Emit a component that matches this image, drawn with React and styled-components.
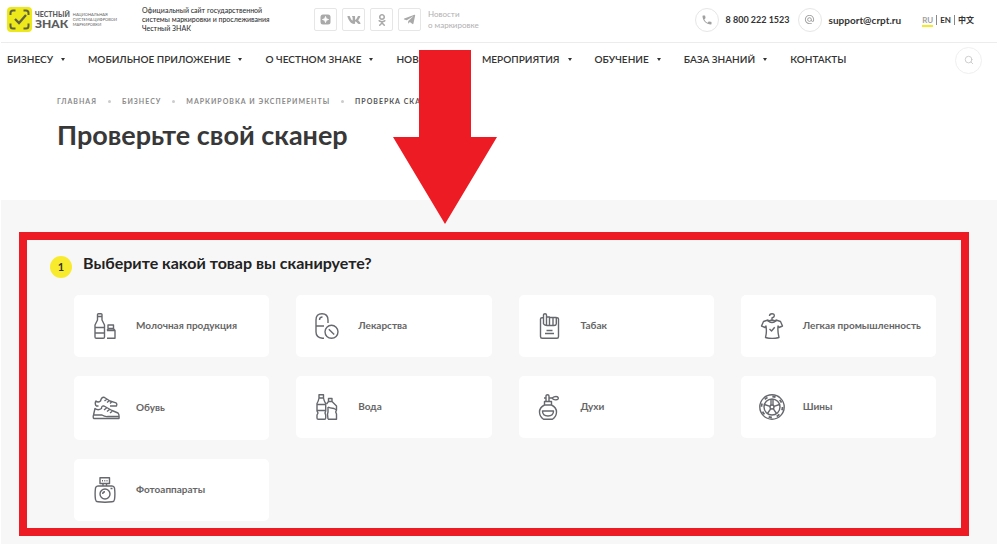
import React from "react";
import styled, { createGlobalStyle } from "styled-components";
import { FaVk, FaOdnoklassniki, FaTelegramPlane } from "react-icons/fa";
import { MdPhone, MdAlternateEmail } from "react-icons/md";
import { FiSearch } from "react-icons/fi";

const menu = [
  { label: "БИЗНЕСУ", sub: true },
  { label: "МОБИЛЬНОЕ ПРИЛОЖЕНИЕ", sub: true },
  { label: "О ЧЕСТНОМ ЗНАКЕ", sub: true },
  { label: "НОВОСТИ", sub: true },
  { label: "МЕРОПРИЯТИЯ", sub: true },
  { label: "ОБУЧЕНИЕ", sub: true },
  { label: "БАЗА ЗНАНИЙ", sub: true },
  { label: "КОНТАКТЫ", sub: false },
];

const crumbs = ["ГЛАВНАЯ", "БИЗНЕСУ", "МАРКИРОВКА И ЭКСПЕРИМЕНТЫ"];

const products = [
  { name: "Молочная продукция", icon: <MilkIcon /> },
  { name: "Лекарства", icon: <PillsIcon /> },
  { name: "Табак", icon: <TobaccoIcon /> },
  { name: "Легкая промышленность", icon: <ShirtIcon /> },
  { name: "Обувь", icon: <ShoesIcon /> },
  { name: "Вода", icon: <WaterIcon /> },
  { name: "Духи", icon: <PerfumeIcon /> },
  { name: "Шины", icon: <TireIcon /> },
  { name: "Фотоаппараты", icon: <CameraIcon /> },
];

function App() {
  return (
    <Page>
      <GlobalStyle />
      <TopBar>
        <Logo href="#">
          <LogoMark />
          <LogoName>
            <LogoSmall>ЧЕСТНЫЙ</LogoSmall>
            <LogoBig>ЗНАК</LogoBig>
          </LogoName>
          <LogoNote>
            НАЦИОНАЛЬНАЯ
            <br />
            СИСТЕМА ЦИФРОВОЙ
            <br />
            МАРКИРОВКИ
          </LogoNote>
        </Logo>
        <About>
          Официальный сайт государственной
          <br />
          системы маркировки и прослеживания
          <br />
          Честный ЗНАК
        </About>
        <Socials>
          <SocialLink href="#" aria-label="Дзен">
            <ZenIcon />
          </SocialLink>
          <SocialLink href="#" aria-label="ВКонтакте">
            <FaVk size={14} />
          </SocialLink>
          <SocialLink href="#" aria-label="Одноклассники">
            <FaOdnoklassniki size={12} />
          </SocialLink>
          <SocialLink href="#" aria-label="Telegram">
            <FaTelegramPlane size={13} />
          </SocialLink>
          <News>
            Новости
            <br />о маркировке
          </News>
        </Socials>
        <Contacts>
          <Contact href="tel:88002221523">
            <Round>
              <MdPhone size={12} />
            </Round>
            8 800 222 1523
          </Contact>
          <Contact href="mailto:support@crpt.ru" $large>
            <Round>
              <MdAlternateEmail size={11} />
            </Round>
            support@crpt.ru
          </Contact>
        </Contacts>
        <Langs>
          <Lang href="#" $active>
            RU
          </Lang>
          <Lang href="#">EN</Lang>
          <Lang href="#">中文</Lang>
        </Langs>
      </TopBar>

      <NavBar>
        {menu.map((item) => (
          <NavLink href="#" key={item.label}>
            {item.label}
            {item.sub && <Caret />}
          </NavLink>
        ))}
        <SearchButton aria-label="Поиск">
          <FiSearch size={10} />
        </SearchButton>
      </NavBar>

      <Intro>
        <Crumbs>
          {crumbs.map((crumb) => (
            <React.Fragment key={crumb}>
              <Crumb href="#">{crumb}</Crumb>
              <Dot />
            </React.Fragment>
          ))}
          <CurrentCrumb>ПРОВЕРКА СКАНЕРА</CurrentCrumb>
        </Crumbs>
        <Title>Проверьте свой сканер</Title>
      </Intro>

      <Section>
        <Frame>
          <StepHead>
            <StepNumber>1</StepNumber>
            <StepTitle>Выберите какой товар вы сканируете?</StepTitle>
          </StepHead>
          <Grid>
            {products.map((product) => (
              <Card key={product.name}>
                <IconBox>{product.icon}</IconBox>
                <CardName>{product.name}</CardName>
              </Card>
            ))}
          </Grid>
        </Frame>
      </Section>
      <Arrow viewBox="0 0 104 174">
        <path d="M26 0h52v87h26L52 174 0 87h26z" fill="#ed1c24" />
      </Arrow>
    </Page>
  );
}

// Drawings

function LogoMark() {
  return (
    <svg width="25" height="25" viewBox="0 0 25 25" fill="none" stroke="#5f6043" strokeWidth="2">
      <rect width="25" height="25" rx="4" fill="#ece81a" stroke="none" />
      <path d="M3.5 8V6Q3.500 3.500 6 3.500H8.500M16.500 3.500H19Q21.500 3.500 21.500 6V8M21.500 16.500V19Q21.500 21.500 19 21.500H16.500M8.500 21.500H6Q3.500 21.500 3.500 19V16.500" />
      <path d="M8 12l4 4 7-8" strokeWidth="2.300" />
    </svg>
  );
}

function ZenIcon() {
  return (
    <svg width="11" height="11" viewBox="0 0 11 11">
      <rect x="0.5" y="0.5" width="10" height="10" rx="2.5" fill="#a9a9a9" />
      <path d="M5.500 2.500Q5.500 5.500 8.500 5.500Q5.500 5.500 5.500 8.500Q5.500 5.500 2.500 5.500Q5.500 5.500 5.500 2.500z" fill="#fff" stroke="#fff" strokeWidth="1" />
    </svg>
  );
}

function MilkIcon() {
  return (
    <LineIcon viewBox="0 0 26 26">
      <path d="M5.500 1.500Q5.500.7 6.500.7H9Q10 .7 10 1.500V7L12.500 12V24Q12.500 25.300 11.200 25.300H4.300Q3 25.300 3 24V12L5.500 7zM5.500 3.500H10M3 14.500H12.500M3 20H12.500" />
      <path d="M15 25.300H23V17.500L21.500 15.700H16.500L15 17.500M16 12H21.500V15.500H16zM15 17.500H23" />
    </LineIcon>
  );
}

function PillsIcon() {
  return (
    <LineIcon viewBox="0 0 26 26">
      <path d="M10 25.300H8.500Q2 24.500 2 19V7Q2 .7 8 .7T14 7V10M2 13H10M5.500 7Q5.500 4 8.500 4" />
      <circle cx="17.500" cy="18.800" r="6.500" />
      <path d="M14.800 16.200L20.200 21.500" />
    </LineIcon>
  );
}

function TobaccoIcon() {
  return (
    <LineIcon viewBox="0 0 26 26">
      <path d="M6 4.700H5Q3.500 4.700 3.500 6V23.500Q3.500 25.300 5.200 25.300H20Q21.500 25.300 21.500 23.500V6Q21.500 4.700 20 4.700H19.500" />
      <path d="M6.500 11V2Q6.500.7 8 .7T9.500 2V12M9.500 4H12.500V12.500M12.500 4.500H16V12.500M16 4.500H19.300V11M6.500 11Q8 12.500 10 12.500H17Q19 12.500 19.300 11M9.500 17.500H15.500M8 20.500H17" />
    </LineIcon>
  );
}

function ShirtIcon() {
  return (
    <LineIcon viewBox="0 0 26 26">
      <path d="M10.500 3Q10.500 .7 13 .7T15.300 3Q15.300 4 13 5V7L8.500 8.200M13 7L17.500 8.200" />
      <path d="M9 7Q10 9.500 13 9.500T17 7L21.500 8.500L23.500 13L20 14.500L19 13Q18.500 19 20 24.500Q13 26.500 6.500 24.500Q8 19 7 13L6 14.500L2.500 13L4.500 8.500z" />
      <path d="M10.500 16L12.500 18L15.700 14.200" />
    </LineIcon>
  );
}

function ShoesIcon() {
  return (
    <LineIcon $size={28} viewBox="0 0 28 28">
      <path d="M4 12Q2.500 9 4 7Q6 9 8.500 7Q9.500 2.500 12.500 3.500L18 7L24 8.800Q25.500 10 24.500 12H18M12.500 7L15 5M15 8.500L17.500 6.500M18 9.500L19.500 8M4 12H6.500" />
      <path d="M1.500 21L3 14.500Q6 17 9.500 14.500Q9.500 11.500 12 12L20 16.500L26 19Q27.500 20.500 27 24.500H2Q.7 24 1.500 21zM1.500 21H10Q13 23 16 22.500H27M12 16L14.500 14M15 17.500L17.500 15.500M18 19L20 17.500" />
    </LineIcon>
  );
}

function WaterIcon() {
  return (
    <LineIcon viewBox="0 0 26 26">
      <path d="M5 .7H9.500V4H5zM5 4Q4.500 7 3 9.500V17L4 19L3 21V24Q3 25.300 4.300 25.300H10.500Q11.700 25.300 11.700 24V21L11 19L11.700 17V9.500Q10 7 9.500 4M3 10.500H11.700M3 16.500H11.700" />
      <path d="M14.500 4.500H18V7.500H14.500zM14.500 7.500L12.500 10M18 7.500L22.500 12V16L21.700 18L22.500 20V25.300H14M14 13Q15.500 14 20 14.500L22.500 16M14 13V18L13.500 20L14 25.300" />
    </LineIcon>
  );
}

function PerfumeIcon() {
  return (
    <LineIcon viewBox="0 0 26 26">
      <path d="M9 7.500V2Q9 .7 10.500 .7T12 2V7.500M7.500 7.500H14.500V11H7.500zM7.500 11Q2.500 13.500 2.500 18Q2.500 22.500 6.500 25.300H15.500Q19.500 22.500 19.500 18Q19.500 13.500 14.500 11M5.500 17H16.500Q16.500 22 11 22T5.500 17z" />
      <path d="M12 4H15Q17 2.500 19 2.500T21.300 4T19 5.800T15 4M7 4H9" />
    </LineIcon>
  );
}

function TireIcon() {
  return (
    <LineIcon viewBox="0 0 26 26">
      <circle cx="13" cy="13" r="12.200" />
      <circle cx="13" cy="13" r="10.500" strokeWidth="1.800" strokeDasharray="3.300 4.950" />
      <circle cx="13" cy="13" r="8" />
      <circle cx="13" cy="13" r="2" />
      <path d="M12 11V5M14 11V5M15 12.300L20.500 10.500M11 12.300L5.500 10.500M14.200 14.700L17.500 19.500M11.800 14.700L8.500 19.500" />
    </LineIcon>
  );
}

function CameraIcon() {
  return (
    <LineIcon viewBox="0 0 26 26">
      <path d="M8 .7H17.500V6.500H8zM11 6.500V9M14.500 6.500V9M10 3.700H11M12.300 3.700H13.300M14.500 3.700H15.500" />
      <path d="M6 9H20Q22 9 22.500 11Q23.300 17 22.500 22.500Q22.300 24.500 20 24.800Q13 25.800 6 24.800Q3.700 24.500 3.500 22.500Q2.700 17 3.500 11Q4 9 6 9zM18.500 11.500H20.500" />
      <circle cx="13" cy="17" r="5" />
      <path d="M10.700 17Q10.700 14.700 13 14.700" />
    </LineIcon>
  );
}

// Styles

const GlobalStyle = createGlobalStyle`
  * { box-sizing: border-box; }
  body {
    margin: 0;
    background: #fff;
    font-family: Lato, "Noto Sans", "Noto Sans CJK SC", sans-serif;
    color: #333;
  }
  a { color: inherit; text-decoration: none; }
  button { font-family: inherit; cursor: pointer; }
`;

const Page = styled.div`
  position: relative;
  min-height: 100vh;
  padding: 0 3px 0 1px;
  display: flex;
  flex-direction: column;
  overflow: hidden;
`;

const TopBar = styled.header`
  display: flex;
  align-items: center;
  height: 43px;
  padding: 0 23px 3px 6px;
  border-bottom: 1px solid #ececec;
  white-space: nowrap;
`;

const Logo = styled.a`
  display: flex;
  align-items: center;
  gap: 3px;
  width: 135px;
  color: #5c5c5c;
`;

const LogoName = styled.span`
  display: flex;
  flex-direction: column;
  font-weight: 900;
`;

const LogoSmall = styled.span`
  font-size: 7px;
  line-height: 8px;
`;

const LogoBig = styled.span`
  font-size: 12px;
  line-height: 11px;
`;

const LogoNote = styled.span`
  font-size: 4px;
  line-height: 5px;
`;

const About = styled.p`
  margin: 0;
  width: 172px;
  font-size: 7px;
  line-height: 9px;
  font-weight: 500;
`;

const Socials = styled.div`
  display: flex;
  align-items: center;
  gap: 5px;
`;

const SocialLink = styled.a`
  display: flex;
  align-items: center;
  justify-content: center;
  width: 23px;
  height: 23px;
  border: 1px solid #e6e6e6;
  border-radius: 2px;
  color: #a9a9a9;
`;

const News = styled.span`
  padding-left: 2px;
  font-size: 8px;
  line-height: 11px;
  color: #b0b0b0;
`;

const Contacts = styled.div`
  display: flex;
  gap: 8px;
  margin-left: auto;
`;

const Contact = styled.a`
  display: flex;
  align-items: center;
  gap: 7px;
  font-size: ${(props) => (props.$large ? "10px" : "9px")};
  font-weight: 700;
`;

const Round = styled.span`
  display: flex;
  align-items: center;
  justify-content: center;
  width: 24px;
  height: 24px;
  border: 1px solid #e6e6e6;
  border-radius: 50%;
  color: #a0a0a0;
`;

const Langs = styled.div`
  display: flex;
  margin-left: 21px;
  font-size: 8px;
  line-height: 10px;
  font-weight: 700;
`;

const Lang = styled.a`
  color: ${(props) => (props.$active ? "#a0a0a0" : "#333")};
  box-shadow: ${(props) => (props.$active ? "0 2px 0 #f5ea28" : "none")};

  & + & {
    margin-left: 3px;
    padding-left: 3px;
    border-left: 1px solid #888;
  }
`;

const NavBar = styled.nav`
  display: flex;
  align-items: center;
  gap: 23px;
  height: 34px;
  padding: 0 15px 0 6px;
  white-space: nowrap;
`;

const NavLink = styled.a`
  display: flex;
  align-items: center;
  gap: 8px;
  padding-bottom: 2px;
  font-size: 10px;
  font-weight: 600;
`;

const Caret = styled.span`
  border: 2px solid transparent;
  border-top: 3px solid #333;
  border-bottom: 0;
`;

const SearchButton = styled.button`
  display: flex;
  align-items: center;
  justify-content: center;
  width: 27px;
  height: 27px;
  margin-left: auto;
  padding: 0;
  border: 1px solid #efefef;
  border-radius: 50%;
  background: #fff;
  color: #c4c4c4;
`;

const Intro = styled.div`
  height: 123px;
  padding: 18px 56px 0;
`;

const Crumbs = styled.div`
  display: flex;
  align-items: center;
  gap: 11px;
  font-size: 7px;
  line-height: 12px;
  font-weight: 700;
  letter-spacing: 1px;
  white-space: nowrap;
`;

const Crumb = styled.a`
  color: #8a8a8a;
`;

const CurrentCrumb = styled.span`
  color: #555;
`;

const Dot = styled.span`
  width: 3px;
  height: 3px;
  border-radius: 50%;
  background: #ccc;
`;

const Title = styled.h1`
  margin: 10px 0 0;
  font-size: 27px;
  line-height: 36px;
  font-weight: 700;
  color: #383838;
`;

const Section = styled.main`
  flex: 1;
  padding: 32px 28px 8px 18px;
  background: #f7f7f7;
`;

const Frame = styled.section`
  height: 100%;
  padding: 12px 25px 7px 23px;
  border: 8px solid #ed1c24;
`;

const StepHead = styled.div`
  display: flex;
  align-items: flex-end;
  gap: 11px;
`;

const StepNumber = styled.span`
  width: 22px;
  height: 22px;
  border-radius: 50%;
  background: #f8eb2d;
  text-align: center;
  font-size: 11px;
  line-height: 22px;
  font-weight: 700;
`;

const StepTitle = styled.h2`
  margin: 0 0 4px;
  font-size: 16px;
  line-height: 22px;
  font-weight: 700;
  color: #222;
`;

const Grid = styled.div`
  display: grid;
  grid-template-columns: repeat(4, 1fr);
  align-items: start;
  gap: 19px 27px;
  margin: 17px 0 0 24px;
`;

const Card = styled.button`
  display: flex;
  align-items: center;
  gap: 16px;
  padding: 18px 12px 18px 18px;
  border: 0;
  border-radius: 5px;
  background: #fff;
  color: #666;
  font-size: 10px;
  font-weight: 700;
  white-space: nowrap;
`;

const CardName = styled.span`
  padding-bottom: 2px;
`;

const IconBox = styled.span`
  display: flex;
  width: 28px;
`;

const LineIcon = styled.svg`
  width: ${(props) => props.$size || 26}px;
  height: ${(props) => props.$size || 26}px;
  fill: none;
  stroke: #66686d;
  stroke-width: 1.400;
  stroke-linejoin: round;
`;

const Arrow = styled.svg`
  position: absolute;
  left: 393px;
  top: 50px;
  width: 104px;
  height: 174px;
  pointer-events: none;
`;

export default App;
